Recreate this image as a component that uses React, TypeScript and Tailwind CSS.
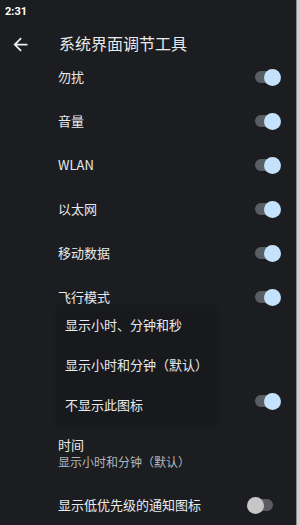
import React from 'react';

const font = { fontFamily: '"Noto Sans CJK SC", "Noto Sans", Roboto, sans-serif' };

const rows = ['勿扰', '音量', 'WLAN', '以太网', '移动数据', '飞行模式'];

const menuItems = ['显示小时、分钟和秒', '显示小时和分钟（默认）', '不显示此图标'];

// 打开状态的开关
const SwitchOn = () => (
  <div className="relative w-[26px] h-[17px] shrink-0">
    <div className="absolute left-0 top-[2.5px] w-[23px] h-[12px] rounded-full bg-[#595e63]" />
    <div className="absolute right-0 top-0 w-[17px] h-[17px] rounded-full bg-[#c4e2fc]" />
  </div>
);

const SwitchOff = () => (
  <div className="relative w-[26px] h-[17px] shrink-0">
    <div className="absolute right-0 top-[2.5px] w-[23px] h-[12px] rounded-full bg-[#5a5c5f]" />
    <div className="absolute left-0 top-0 w-[17px] h-[17px] rounded-full bg-[#c7c7c7]" />
  </div>
);

export default function App() {
  return (
    <div className="w-[300px] h-[525px] flex overflow-hidden bg-[#1b1d20]" style={font}>
      <div className="relative flex-1 flex flex-col">
        {/* 状态栏 */}
        <div className="h-[22px] pl-[5px] flex items-center">
          <span className="text-[11px] font-bold text-white leading-none" style={{ fontFamily: 'Roboto, sans-serif' }}>
            2:31
          </span>
        </div>

        {/* 标题栏 */}
        <div className="h-[33px] flex items-start pt-[12px]">
          <div className="w-[59px] flex justify-start pl-[10px]">
            <svg width="21" height="21" viewBox="0 0 24 24" className="-mt-[0.5px]">
              <path d="M20 11H7.83l5.59-5.59L12 4l-8 8 8 8 1.41-1.41L7.83 13H20v-2z" fill="#eceef0" />
            </svg>
          </div>
          <span className="text-[16px] leading-[18px] text-[#e8eaed]">系统界面调节工具</span>
        </div>

        {/* 开关列表 */}
        {rows.map((r) => (
          <div key={r} className="h-[44px] flex items-center justify-between pl-[58px] pr-[15px]">
            <span className="text-[13px] text-[#e8eaed]">{r}</span>
            <SwitchOn />
          </div>
        ))}

        <div className="h-[60px]" />

        <div className="h-[44px] flex items-center justify-end pr-[15px]">
          <SwitchOn />
        </div>

        <div className="h-[62px] pl-[58px] pt-[13px] flex flex-col">
          <span className="text-[13px] leading-[18px] text-[#e8eaed]">时间</span>
          <span className="text-[12px] leading-[16px] text-[#b4b7bb]">显示小时和分钟（默认）</span>
        </div>

        <div className="h-[40px] flex items-center justify-between pl-[58px] pr-[23px]">
          <span className="text-[13px] text-[#e8eaed]">显示低优先级的通知图标</span>
          <SwitchOff />
        </div>

        {/* 弹出菜单 */}
        <div className="absolute left-[57px] top-[305px] w-[159px] bg-[#18191c] rounded-[3px] shadow-[0_1px_4px_rgba(0,0,0,0.2)]">
          {menuItems.map((m) => (
            <div key={m} className="h-[40px] flex items-center pl-[8px]">
              <span className="text-[13px] text-[#e8eaed] whitespace-nowrap">{m}</span>
            </div>
          ))}
        </div>
      </div>
      <div className="w-[4px] h-full bg-[#cfd0d2] border-l border-[#8a8b8d]" />
    </div>
  );
}
